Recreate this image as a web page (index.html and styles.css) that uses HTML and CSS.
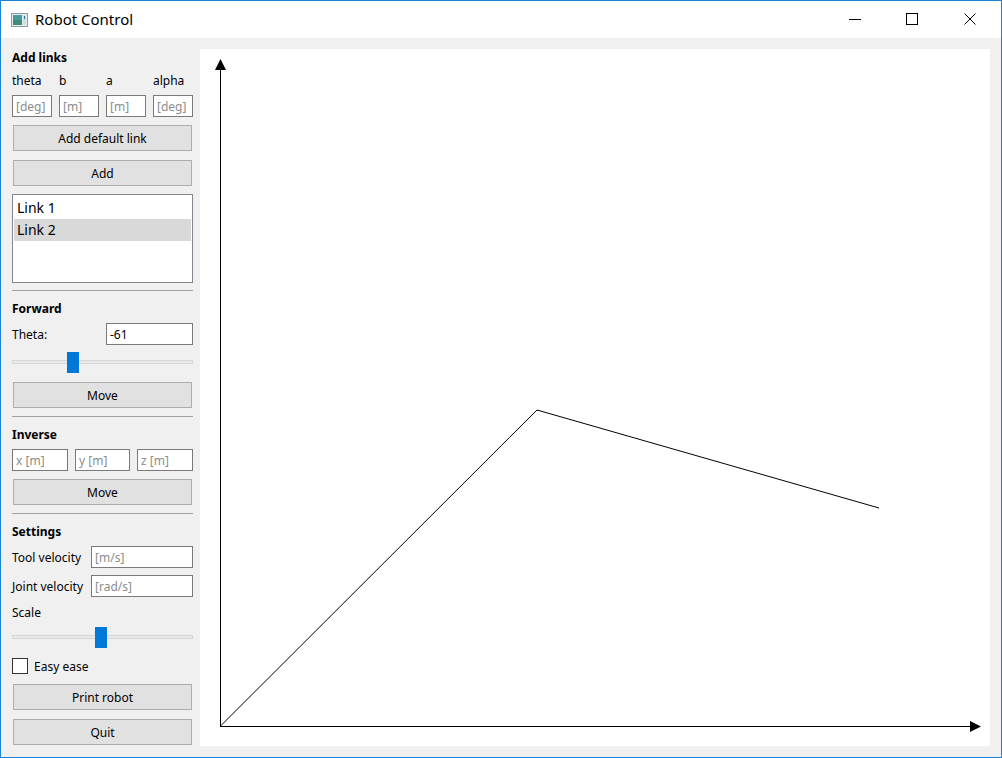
FILE: index.html
```html
<!DOCTYPE html>
<html>
<head>
<meta charset="utf-8">
<title>Robot Control</title>
<link rel="stylesheet" href="styles.css">
</head>
<body>
<div class="window">
  <div class="titlebar">
    <svg class="app-icon" width="17" height="14" viewBox="0 0 17 14">
      <rect x="0.5" y="0.5" width="16" height="13" fill="#e8eef0" stroke="#8a9aa0"/>
      <rect x="2" y="2" width="9" height="10" fill="#3f8a78"/>
      <rect x="2" y="2" width="9" height="5" fill="#4d9fb0" opacity="0.7"/>
      <rect x="12" y="2" width="3" height="10" fill="#cfdde2"/>
      <rect x="13" y="3" width="1" height="3" fill="#2d6fa0"/>
    </svg>
    <span class="title">Robot Control</span>
    <div class="controls">
      <svg class="ctl" width="46" height="30" viewBox="0 0 46 30"><line x1="18" y1="15.5" x2="30" y2="15.5" stroke="#000" stroke-width="1"/></svg>
      <svg class="ctl" width="46" height="30" viewBox="0 0 46 30"><rect x="17.5" y="9.5" width="11" height="11" fill="none" stroke="#000" stroke-width="1"/></svg>
      <svg class="ctl" width="46" height="30" viewBox="0 0 46 30"><path d="M17.5 9.5 L28.5 20.5 M28.5 9.5 L17.5 20.5" stroke="#000" stroke-width="1" fill="none"/></svg>
    </div>
  </div>
  <div class="content">
    <div class="panel">
      <div class="heading h-first">Add links</div>
      <div class="grid4 labels">
        <span>theta</span><span>b</span><span>a</span><span>alpha</span>
      </div>
      <div class="grid4 inputs4">
        <div class="field ph">[deg]</div>
        <div class="field ph">[m]</div>
        <div class="field ph">[m]</div>
        <div class="field ph">[deg]</div>
      </div>
      <div class="btn mt8">Add default link</div>
      <div class="btn mt9">Add</div>
      <div class="list">
        <div class="item">Link 1</div>
        <div class="item sel">Link 2</div>
      </div>
      <div class="sep"></div>
      <div class="heading">Forward</div>
      <div class="row theta-row">
        <span>Theta:</span>
        <div class="field val theta-field">-61</div>
      </div>
      <div class="slider"><div class="track"></div><div class="handle" style="left:55px"></div></div>
      <div class="btn mt9">Move</div>
      <div class="sep sep-wide"></div>
      <div class="heading">Inverse</div>
      <div class="grid3">
        <div class="field ph">x [m]</div>
        <div class="field ph">y [m]</div>
        <div class="field ph">z [m]</div>
      </div>
      <div class="btn mt8">Move</div>
      <div class="sep sep-wide"></div>
      <div class="heading">Settings</div>
      <div class="row set-row">
        <span>Tool velocity</span>
        <div class="field ph vel">[m/s]</div>
      </div>
      <div class="row set-row">
        <span>Joint velocity</span>
        <div class="field ph vel">[rad/s]</div>
      </div>
      <div class="label-line">Scale</div>
      <div class="slider"><div class="track"></div><div class="handle" style="left:83px"></div></div>
      <div class="check-row">
        <span class="box"></span><span>Easy ease</span>
      </div>
      <div class="btn mt10">Print robot</div>
      <div class="btn mt9">Quit</div>
    </div>
    <div class="canvas">
      <svg width="790" height="697" viewBox="0 0 790 697">
        <line x1="20.5" y1="677.5" x2="20.5" y2="18" stroke="#000" stroke-width="1"/>
        <polygon points="20.5,10 15,21 26,21" fill="#000"/>
        <line x1="20" y1="677.5" x2="772" y2="677.5" stroke="#000" stroke-width="1"/>
        <polygon points="781,677.5 770,672 770,683" fill="#000"/>
        <polyline points="20.5,677 337,361 679,459" fill="none" stroke="#000" stroke-width="1"/>
      </svg>
    </div>
  </div>
</div>
</body>
</html>
```
FILE: styles.css
```css
html, body {
  margin: 0;
  padding: 0;
  background: #f0f0f0;
}
.window {
  width: 1002px;
  height: 758px;
  box-sizing: border-box;
  border: 1px solid #1883d7;
  background: #f0f0f0;
  display: flex;
  flex-direction: column;
  font-family: "Noto Sans", "Open Sans", sans-serif;
  font-size: 12px;
  color: #000;
}
.titlebar {
  height: 37px;
  background: #fff;
  display: flex;
  align-items: center;
  flex: none;
}
.app-icon {
  margin-left: 10px;
}
.title {
  margin-left: 7px;
  font-size: 15px;
  font-family: "Noto Sans", sans-serif;
  color: #000;
  margin-top: -1px;
}
.controls {
  margin-left: auto;
  display: flex;
  margin-top: -1px;
  margin-right: 8px;
}
.ctl { display: block; margin-left: 12px; }
.ctl:first-child { margin-left: 0; }
.content {
  flex: 1;
  display: flex;
  min-height: 0;
}
.panel {
  width: 181px;
  padding: 11px 7px 0 11px;
  display: flex;
  flex-direction: column;
  flex: none;
}
.heading {
  height: 16px;
  line-height: 18px;
  font-weight: bold;
  margin-top: 9px;
}
.h-first { margin-top: 0; }
.grid4 {
  display: grid;
  grid-template-columns: 40px 40px 40px 40px;
  column-gap: 7px;
}
.labels {
  margin-top: 7px;
  height: 16px;
  line-height: 18px;
}
.inputs4 { margin-top: 7px; }
.field {
  height: 22px;
  box-sizing: border-box;
  border: 1px solid #7a7a7a;
  background: #fff;
  line-height: 21px;
  padding-left: 3px;
  white-space: nowrap;
  overflow: hidden;
}
.ph { color: #8c8c8c; }
.val { color: #000; }
.btn {
  height: 26px;
  box-sizing: border-box;
  border: 1px solid #adadad;
  background: #e1e1e1;
  margin-left: 1px;
  margin-right: 1px;
  text-align: center;
  line-height: 26px;
}
.mt8 { margin-top: 8px; }
.mt9 { margin-top: 9px; }
.mt10 { margin-top: 10px; }
.list {
  margin-top: 8px;
  height: 89px;
  box-sizing: border-box;
  border: 1px solid #828790;
  background: #fff;
  padding: 3px 1px 0 1px;
}
.item {
  height: 21px;
  line-height: 20px;
  font-size: 14px;
  padding-left: 3px;
}
.item.sel { background: #d9d9d9; height: 22px; line-height: 22px; }
.sep {
  height: 1px;
  background: #a0a0a0;
  margin-top: 7px;
}
.sep.sep-wide { margin-top: 8px; }
.row {
  display: flex;
  align-items: center;
  justify-content: space-between;
  margin-top: 7px;
}
.row > span { padding-top: 1px; }
.theta-field { width: 87px; }
.vel { width: 102px; }
.slider {
  position: relative;
  height: 21px;
  margin-top: 7px;
}
.track {
  position: absolute;
  left: 0;
  right: 0;
  top: 8px;
  height: 4px;
  box-sizing: border-box;
  border: 1px solid #d6d6d6;
  background: #e7eaea;
}
.handle {
  position: absolute;
  top: 0;
  width: 12px;
  height: 21px;
  background: #0078d7;
}
.grid3 {
  margin-top: 7px;
  display: grid;
  grid-template-columns: 56px 55px 56px;
  column-gap: 7px;
}
.label-line {
  margin-top: 7px;
  height: 16px;
  line-height: 18px;
}
.check-row {
  margin-top: 10px;
  height: 16px;
  display: flex;
  align-items: center;
}
.check-row > span:last-child { padding-top: 1px; }
.box {
  width: 16px;
  height: 16px;
  box-sizing: border-box;
  border: 1px solid #333;
  background: #fff;
  margin-right: 6px;
}
.canvas {
  margin: 11px 11px 11px 0;
  width: 790px;
  height: 697px;
  background: #fff;
}
.canvas svg { display: block; }
```
